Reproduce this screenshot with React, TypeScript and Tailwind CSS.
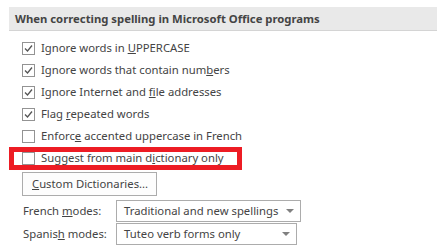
import React from "react";

const font = { fontFamily: '"Noto Sans", "Open Sans", sans-serif' };

function Check({ checked }: { checked: boolean }) {
  return (
    <div className="w-[13px] h-[13px] border border-[#939393] bg-white shrink-0 flex items-center justify-center">
      {checked && (
        <svg width="11" height="11" viewBox="0 0 11 11">
          <path d="M2 5.5 L4.5 8 L9 2.5" fill="none" stroke="#555" strokeWidth="1.3" />
        </svg>
      )}
    </div>
  );
}

function Row({ checked, children }: { checked: boolean; children: React.ReactNode }) {
  return (
    <div className="h-[22px] flex items-center pl-[22px] gap-[6px]">
      <Check checked={checked} />
      <span className="text-[11.3px] text-[#444] leading-none whitespace-nowrap">{children}</span>
    </div>
  );
}

function Select({ text, width }: { text: string; width: string }) {
  return (
    <div className={`${width} h-[22px] border border-[#acacac] bg-white flex items-center pl-[7px] pr-[6px] justify-between shrink-0`}>
      <span className="text-[11.3px] text-[#444] leading-none whitespace-nowrap">{text}</span>
      <svg width="8" height="5" viewBox="0 0 8 5">
        <path d="M0 0 L8 0 L4 4 Z" fill="#808080" />
      </svg>
    </div>
  );
}

export default function App() {
  return (
    <div className="w-[437px] h-[251px] bg-white overflow-hidden" style={font}>
      <div className="pt-[7px] pl-[9px]">
        <div className="h-[24px] bg-[#e9e9e9] border-b border-[#d4d4d4] flex items-center pl-[6px]">
          <span className="text-[11.3px] font-bold text-[#444] leading-none whitespace-nowrap">
            When correcting spelling in Microsoft Office programs
          </span>
        </div>
      </div>
      <div className="pt-[6px]">
        <Row checked>
          Ignore words in <u>U</u>PPERCASE
        </Row>
        <Row checked>
          Ignore words that contain num<u>b</u>ers
        </Row>
        <Row checked>
          Ignore Internet and <u>f</u>ile addresses
        </Row>
        <Row checked>
          Flag <u>r</u>epeated words
        </Row>
        <Row checked={false}>
          Enforc<u>e</u> accented uppercase in French
        </Row>
        <div className="relative">
          <Row checked={false}>
            Suggest from main d<u>i</u>ctionary only
          </Row>
          <div className="absolute left-[9px] top-0 w-[233px] h-[23px] border-[5px] border-[#ed1c24]" />
        </div>
      </div>
      <div className="pl-[22px] pt-[3px]">
        <div className="w-[135px] h-[24px] border border-[#acacac] bg-[#fdfdfd] flex items-center pl-[9px]">
          <span className="text-[11.3px] text-[#444] leading-none whitespace-nowrap">
            <u>C</u>ustom Dictionaries...
          </span>
        </div>
      </div>
      <div className="pl-[23px] pt-[4px] flex flex-col gap-[1px]">
        <div className="flex items-center">
          <span className="w-[93px] shrink-0 text-[11.3px] text-[#444] leading-none whitespace-nowrap">
            French <u>m</u>odes:
          </span>
          <Select text="Traditional and new spellings" width="w-[185px]" />
        </div>
        <div className="flex items-center">
          <span className="w-[93px] shrink-0 text-[11.3px] text-[#444] leading-none whitespace-nowrap">
            Spanis<u>h</u> modes:
          </span>
          <Select text="Tuteo verb forms only" width="w-[181px]" />
        </div>
      </div>
    </div>
  );
}
